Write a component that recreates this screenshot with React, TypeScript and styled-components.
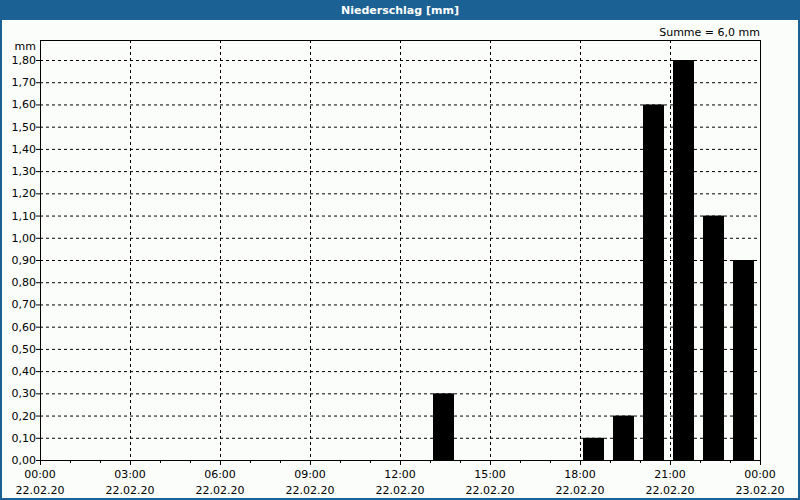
import React from "react";
import styled, { createGlobalStyle } from "styled-components";

const Global = createGlobalStyle`
  html, body { margin: 0; padding: 0; background: #fff; }
  body { font-family: "DejaVu Sans", "Liberation Sans", sans-serif; }
`;

const Frame = styled.div`
  width: 800px;
  height: 500px;
  box-sizing: border-box;
  display: flex;
  flex-direction: column;
  background: #1c6194;
`;

const TitleBar = styled.div`
  height: 20px;
  flex: none;
  display: flex;
  align-items: center;
  justify-content: center;
  color: #fff;
  font-weight: bold;
  font-size: 11px;
`;

const Body = styled.div`
  flex: 1;
  margin: 0 2px 2px 2px;
  background: #fbfdfb;
`;

const values: Record<number, number> = { 13: 0.3, 18: 0.1, 19: 0.2, 20: 1.6, 21: 1.8, 22: 1.1, 23: 0.9 };
const L = 40, R = 760, B = 460, T = 40;
const y = (v: number) => B - v * 2000 / 9;
const x = (h: number) => L + h * 30;
const fmt = (v: number) => v.toFixed(2).replace(".", ",");

function Chart() {
  const ticks = Array.from({ length: 19 }, (_, i) => i / 10);
  const hours = [0, 3, 6, 9, 12, 15, 18, 21, 24];
  const txt = { fontSize: 11, fontFamily: "DejaVu Sans, sans-serif", fill: "#000" } as const;
  return (
    <svg width={796} height={478} style={{ display: "block" }}>
      <g transform="translate(-2,-20)">
        {ticks.slice(1).map((v) => (
          <line key={v} x1={L} x2={R} y1={y(v) + 0.5} y2={y(v) + 0.5} stroke="#000" strokeDasharray="3,3" />
        ))}
        {hours.slice(1, -1).map((h) => (
          <line key={h} x1={x(h) + 0.5} x2={x(h) + 0.5} y1={T} y2={B} stroke="#000" strokeDasharray="3,3" />
        ))}
        {Object.entries(values).map(([h, v]) => (
          <rect key={h} x={x(+h) + 3} y={y(v)} width={21} height={B - y(v)} fill="#000" />
        ))}
        <rect x={L + 0.5} y={T + 0.5} width={R - L} height={B - T} fill="none" stroke="#000" />
        {Array.from({ length: 25 }, (_, h) => (
          <line key={h} x1={x(h) + 0.5} x2={x(h) + 0.5} y1={B} y2={B + (h % 3 === 0 ? 5 : 3)} stroke="#000" />
        ))}
        {ticks.map((v) => (
          <line key={v} x1={L - 4} x2={L} y1={y(v) + 0.5} y2={y(v) + 0.5} stroke="#000" />
        ))}
        {ticks.map((v) => (
          <text key={v} x={L - 4} y={y(v) + 4} textAnchor="end" {...txt}>{fmt(v)}</text>
        ))}
        <text x={L - 4} y={T + 10} textAnchor="end" {...txt}>mm</text>
        <text x={R} y={T - 4} textAnchor="end" {...txt}>Summe = 6,0 mm</text>
        {hours.map((h) => (
          <g key={h}>
            <text x={x(h)} y={B + 18} textAnchor="middle" {...txt}>{h === 24 ? "00:00" : `${String(h).padStart(2, "0")}:00`}</text>
            <text x={x(h)} y={B + 34} textAnchor="middle" {...txt}>{h === 24 ? "23.02.20" : "22.02.20"}</text>
          </g>
        ))}
      </g>
    </svg>
  );
}

export default function App() {
  return (
    <>
      <Global />
      <Frame>
        <TitleBar>Niederschlag [mm]</TitleBar>
        <Body>
          <Chart />
        </Body>
      </Frame>
    </>
  );
}
